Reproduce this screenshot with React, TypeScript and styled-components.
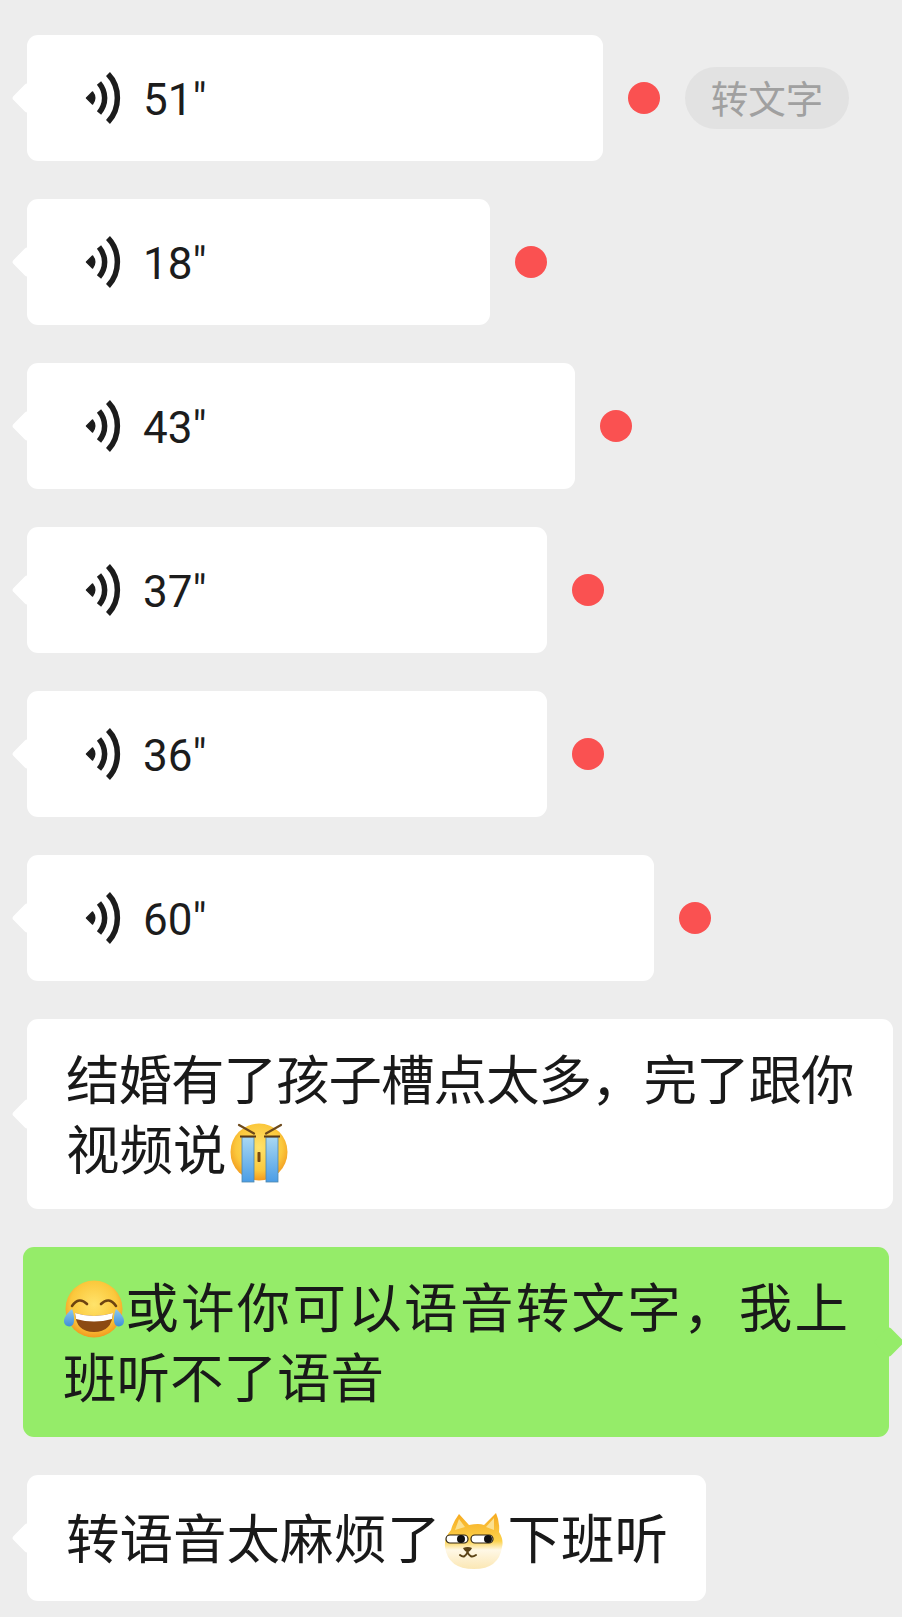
import React from "react";
import styled, { createGlobalStyle } from "styled-components";

const GlobalStyle = createGlobalStyle`
  html, body {
    margin: 0;
    padding: 0;
    background-color: #ededed;
  }
  body {
    font-family: "Noto Sans CJK SC", sans-serif;
    overflow: hidden;
  }
`;

const Page = styled.div`
  width: 902px;
  height: 1617px;
  box-sizing: border-box;
  padding-top: 35px;
  display: flex;
  flex-direction: column;
  gap: 38px;
  overflow: hidden;
  background-color: #ededed;
`;

const Row = styled.div`
  display: flex;
  align-items: center;
`;

const Bubble = styled.div<{ $mine?: boolean }>`
  position: relative;
  box-sizing: border-box;
  border-radius: 11px;
  background-color: ${(p) => (p.$mine ? "#95ec69" : "#ffffff")};
  margin-left: ${(p) => (p.$mine ? "23px" : "27px")};

  &::before {
    content: "";
    position: absolute;
    top: 50%;
    width: 22px;
    height: 22px;
    border-radius: 3px;
    background-color: inherit;
    transform: translateY(-50%) rotate(45deg);
    ${(p) => (p.$mine ? "right: -11px;" : "left: -11px;")}
  }
`;

const VoiceBubble = styled(Bubble)<{ $width: number }>`
  width: ${(p) => p.$width}px;
  height: 126px;
  display: flex;
  align-items: center;
  padding-left: 56px;
`;

const Duration = styled.span`
  margin-left: 20px;
  padding-top: 3px;
  font-family: Roboto, sans-serif;
  font-size: 44px;
  line-height: 50px;
  color: #1c1c1c;
`;

const UnreadDot = styled.span`
  width: 32px;
  height: 32px;
  margin-left: 25px;
  border-radius: 50%;
  background-color: #fa5151;
`;

const ConvertPill = styled.span`
  width: 164px;
  height: 62px;
  margin-left: 25px;
  padding-bottom: 3px;
  box-sizing: border-box;
  border-radius: 31px;
  background-color: #e2e2e2;
  color: #a0a0a0;
  display: flex;
  align-items: center;
  justify-content: center;
  font-size: 37.5px;
`;

const TextBubble = styled(Bubble)<{ $width: number }>`
  width: ${(p) => p.$width}px;
  min-height: 126px;
  padding: 23px ${(p) => (p.$mine ? "41px" : "36px")} 27px
    ${(p) => (p.$mine ? "40px" : "39px")};
  display: flex;
  align-items: center;
`;

const MessageText = styled.div<{ $justify?: boolean }>`
  width: 100%;
  font-size: 53.5px;
  line-height: 70px;
  color: #191919;
  white-space: ${(p) => (p.$justify ? "normal" : "nowrap")};
  text-align: ${(p) => (p.$justify ? "justify" : "left")};
`;

const TightLine = styled.span`
  display: block;
  letter-spacing: -1px;
  white-space: nowrap;
`;

const Emoji = styled.svg<{ $left?: number; $right?: number }>`
  width: 62px;
  height: 62px;
  vertical-align: baseline;
  margin-top: -14px;
  margin-bottom: -13px;
  margin-left: ${(p) => p.$left ?? 0}px;
  margin-right: ${(p) => p.$right ?? 0}px;
`;

const VoiceIcon = () => (
  <svg width="40" height="52" viewBox="0 0 40 52" fill="none">
    <path d="M3.5 26 L9.5 20 Q14 26 9.5 32 Z" fill="#1c1c1c" stroke="#1c1c1c" strokeWidth="1.5" strokeLinejoin="round" />
    <path d="M16 11 C23.5 20 23.5 32 16 41" stroke="#1c1c1c" strokeWidth="5.5" />
    <path d="M25 2 C37.5 15 37.5 37 25 50" stroke="#1c1c1c" strokeWidth="5.5" />
  </svg>
);

const FaceGradient = ({ id }: { id: string }) => (
  <radialGradient id={id} cx="50%" cy="42%" r="58%">
    <stop offset="0%" stopColor="#ffe36b" />
    <stop offset="70%" stopColor="#fbc83c" />
    <stop offset="100%" stopColor="#f29a1f" />
  </radialGradient>
);

const CryEmoji = () => (
  <Emoji viewBox="0 0 62 62" $left={1}>
    <defs>
      <FaceGradient id="cryFace" />
      <linearGradient id="tear" x1="0" y1="0" x2="0" y2="1">
        <stop offset="0%" stopColor="#a9d8f2" />
        <stop offset="100%" stopColor="#4a9de6" />
      </linearGradient>
    </defs>
    <circle cx="31" cy="31" r="28.5" fill="url(#cryFace)" />
    <rect x="14" y="16" width="12" height="45" fill="url(#tear)" stroke="#4f87ad" strokeWidth="0.8" />
    <rect x="38" y="16" width="12" height="45" fill="url(#tear)" stroke="#4f87ad" strokeWidth="0.8" />
    <path d="M12 15.5 H28 M36 15.5 H52" stroke="#5b3a14" strokeWidth="2" />
    <path d="M11 4 L26 12.5 M53 4 L38 12.5" stroke="#6d4a1c" strokeWidth="2.2" strokeLinecap="round" />
    <rect x="29.5" y="31" width="3" height="10" rx="0.8" fill="#7a4a10" />
  </Emoji>
);

const JoyEmoji = () => (
  <Emoji viewBox="0 0 62 62" $right={-2}>
    <defs>
      <FaceGradient id="joyFace" />
      <linearGradient id="drop" x1="0" y1="0" x2="0" y2="1">
        <stop offset="0%" stopColor="#8fc9ee" />
        <stop offset="100%" stopColor="#3f8fd8" />
      </linearGradient>
    </defs>
    <circle cx="31" cy="30" r="28.5" fill="url(#joyFace)" />
    <path d="M9 27 Q16 17 24 25 M38 25 Q46 17 53 27" stroke="#6d4310" strokeWidth="2.6" fill="none" strokeLinecap="round" />
    <path d="M12 34 Q31 40 50 34 Q49 53 31 53 Q13 53 12 34 Z" fill="#8c4a12" />
    <path d="M12 34 Q31 40 50 34 L49 40 Q31 45 13 40 Z" fill="#ffffff" />
    <path d="M9 30 C4 34 0.5 39 1 43 C1.5 47 6 48.5 9 46.5 C12 44.5 11.5 36 9 30 Z" fill="url(#drop)" />
    <path d="M53 30 C58 34 61.5 39 61 43 C60.5 47 56 48.5 53 46.5 C50 44.5 50.5 36 53 30 Z" fill="url(#drop)" />
  </Emoji>
);

const DogeEmoji = () => (
  <Emoji viewBox="0 0 62 62" $left={2} $right={3}>
    <defs>
      <linearGradient id="dogeFur" x1="0" y1="0" x2="0" y2="1">
        <stop offset="0%" stopColor="#f6a91e" />
        <stop offset="50%" stopColor="#fcd24c" />
        <stop offset="66%" stopColor="#fff8e6" />
        <stop offset="100%" stopColor="#fbe7b4" />
      </linearGradient>
    </defs>
    <path d="M16 4 L26 15 Q36 13 41 15 L53 3 Q57 12 56 22 Q61 30 59 37 Q56 59 31 59 Q5 59 2 37 Q1 28 8 20 Q10 12 16 4 Z" fill="url(#dogeFur)" />
    <path d="M16 9 L22 17 L12 20 Z M51 8 L51 20 L43 17 Z" fill="#fbe08f" />
    <rect x="3" y="25" width="22" height="8" rx="4" fill="#ffffff" stroke="#2e2310" strokeWidth="1.2" />
    <rect x="28" y="25" width="22" height="8" rx="4" fill="#ffffff" stroke="#2e2310" strokeWidth="1.2" />
    <circle cx="18" cy="29" r="4" fill="#111111" />
    <circle cx="45" cy="29" r="4" fill="#111111" />
    <path d="M20 38 Q25 36 29 38 Q27 42 24.5 42 Q22 42 20 38 Z" fill="#5b4316" />
    <path d="M17 45 Q22 49 24.5 42 Q27 49 33 45" stroke="#5b4316" strokeWidth="2" fill="none" strokeLinecap="round" />
  </Emoji>
);

const voices = [
  { seconds: 51, width: 576, pill: true },
  { seconds: 18, width: 463 },
  { seconds: 43, width: 548 },
  { seconds: 37, width: 520 },
  { seconds: 36, width: 520 },
  { seconds: 60, width: 627 },
];

export default function App() {
  return (
    <>
      <GlobalStyle />
      <Page>
        {voices.map((v) => (
          <Row key={v.seconds}>
            <VoiceBubble $width={v.width}>
              <VoiceIcon />
              <Duration>{v.seconds}"</Duration>
            </VoiceBubble>
            <UnreadDot />
            {v.pill && <ConvertPill>转文字</ConvertPill>}
          </Row>
        ))}
        <Row>
          <TextBubble $width={866}>
            <MessageText>
              <TightLine>结婚有了孩子槽点太多，完了跟你</TightLine>
              视频说
              <CryEmoji />
            </MessageText>
          </TextBubble>
        </Row>
        <Row>
          <TextBubble $mine $width={866}>
            <MessageText $justify>
              <JoyEmoji />
              或许你可以语音转文字，我上班听不了语音
            </MessageText>
          </TextBubble>
        </Row>
        <Row>
          <TextBubble $width={679}>
            <MessageText>
              转语音太麻烦了
              <DogeEmoji />
              下班听
            </MessageText>
          </TextBubble>
        </Row>
      </Page>
    </>
  );
}
